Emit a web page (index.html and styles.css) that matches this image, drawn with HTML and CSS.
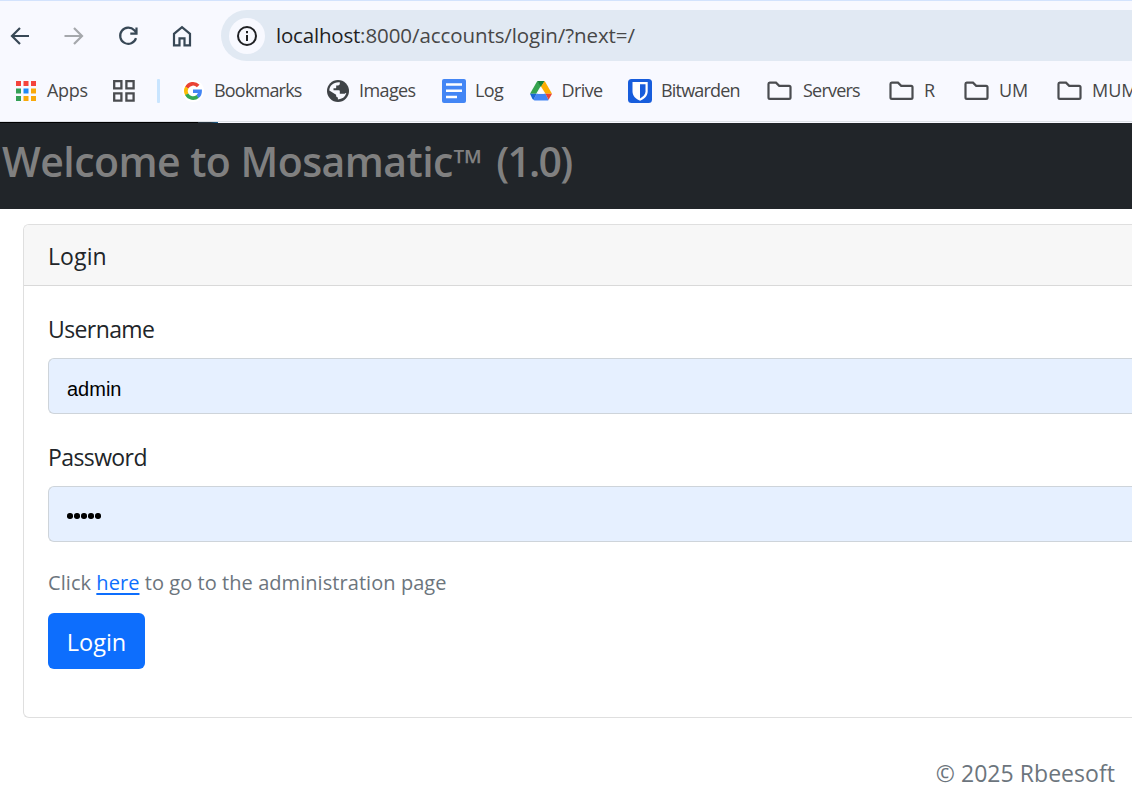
FILE: index.html
```html
<!DOCTYPE html>
<html lang="en">
<head>
<meta charset="utf-8">
<title>Mosamatic</title>
<link rel="stylesheet" href="styles.css">
</head>
<body>
<div class="browser">
  <div class="toolbar">
    <svg class="nav nav-back" width="24" height="24" viewBox="0 0 24 24"><path d="M21 12H4.500M12 4L4 12l8 8" /></svg>
    <svg class="nav nav-forward" width="24" height="24" viewBox="0 0 24 24"><path d="M2.500 12H20M12 4l8 8-8 8" /></svg>
    <svg class="nav nav-reload" width="24" height="24" viewBox="0 0 24 24"><path d="M20 14.200A8.100 8.100 0 1 1 18.300 6.300L20.300 8.500M20.500 3.500v6.200h-6.200" /></svg>
    <svg class="nav nav-home" width="24" height="24" viewBox="0 0 24 24"><path d="M4 21.300V9.800L12 3.200l8 6.600v11.500h-5.500v-7h-5v7z" /></svg>
    <div class="address">
      <span class="info"><svg width="24" height="24" viewBox="0 0 24 24"><circle cx="12" cy="12" r="9" fill="none" stroke="#202124" stroke-width="2"/><path d="M11 11h2v6h-2zM11 7h2v2.200h-2z" fill="#202124"/></svg></span>
      <span class="url"><b>localhost</b>:8000/accounts/login/?next=/</span>
    </div>
  </div>
  <div class="bookmarks">
    <div class="mark apps">
      <svg width="20" height="20" viewBox="0 0 20 20"><path fill="#f4433c" d="M0 0h5v5H0zM7.500 0h5v5h-5zM15 0h5v5h-5z"/><path fill="#34a056" d="M0 7.500h5v5H0zM0 15h5v5H0z"/><path fill="#1e88f5" d="M7.500 7.500h5v5h-5z"/><path fill="#f9a90a" d="M15 7.500h5v5h-5zM7.500 15h5v5h-5zM15 15h5v5h-5z"/></svg>
      <span>Apps</span>
    </div>
    <svg class="grid" width="22" height="22" viewBox="0 0 22 22"><path d="M1.200 1.200h7.200v7.200H1.200zM13.400 1.200h7.200v7.200h-7.200zM1.200 13.400h7.200v7.200H1.200zM13.400 13.400h7.200v7.200h-7.200z" fill="none" stroke="#4a4c50" stroke-width="2.300"/></svg>
    <i class="divider"></i>
    <div class="mark google">
      <svg width="22" height="22" viewBox="0 0 22 22"><circle cx="11" cy="11" r="11" fill="#fff"/><g fill="none" stroke-width="3.600"><path stroke="#ea4335" d="M4.700 7.700A7.100 7.100 0 0 1 16.200 6"/><path stroke="#fbbc05" d="M4.800 14.500a7.100 7.100 0 0 1 0-7"/><path stroke="#34a853" d="M15.800 16.300A7.100 7.100 0 0 1 4.700 14.300"/><path stroke="#4285f4" d="M11 11.200h7.100q0 3.500-2.500 5.300"/></g></svg>
      <span>Bookmarks</span>
    </div>
    <div class="mark images">
      <svg width="22" height="22" viewBox="0 0 22 22"><circle cx="11" cy="11" r="11" fill="#3f4347"/><path fill="#f8f9ff" d="M12.800 2.200v1.600q0 1.800-1.800 1.800H9.200v1.800q0 .9-.9.900H6.500v1.900h5.400q.9 0 .9.900v2.700h3.700q1.300 0 2.100-.9.700 0 .7.400-1.900 5.800-8.400 6.100v-1.800q-1.800 0-1.800-1.800v-1L2.300 10.400C2.500 5.500 6.500 1.700 12.800 2.200z"/></svg>
      <span>Images</span>
    </div>
    <div class="mark log">
      <svg width="24" height="24" viewBox="0 0 24 24"><rect width="24" height="24" rx="2" fill="#4386f5"/><path d="M4 5.500h16M4 11.800h16M4 18h11" stroke="#fff" stroke-width="2.500"/></svg>
      <span>Log</span>
    </div>
    <div class="mark drive">
      <svg width="22" height="20" viewBox="0 0 22 20"><path fill="#34a34f" d="M7.300 0L0 12.700h6.200L11 4.500z"/><path fill="#188038" d="M7.300 0h7.400L11 6.300z"/><path fill="#fbad00" d="M14.700 0L22 12.700h-6.500L11 5.500z"/><path fill="#1967d2" d="M0 12.700h6.700L3.600 18.800q-1-.3-1.400-1.200z"/><path fill="#4285f4" d="M6.600 12.700h9l3 6.300q-.6.500-1.400.5H4.700q-.7 0-1.300-.7z"/><path fill="#ea4335" d="M15.400 12.700H22l-3.400 6.100z"/><path fill="#fff" d="M11 7l3.200 5.700H7.800z"/></svg>
      <span>Drive</span>
    </div>
    <div class="mark bitwarden">
      <svg width="24" height="24" viewBox="0 0 24 24"><rect width="24" height="24" rx="3.500" fill="#175ddc"/><path fill="#fff" d="M4.500 3h15.200v9.500c0 4.500-3.500 7.500-7.600 9.300-4.100-1.800-7.600-4.800-7.600-9.300z"/><path fill="#175ddc" d="M12 5.200h5.500v7.300c0 3-2.500 5.200-5.500 6.900z"/></svg>
      <span>Bitwarden</span>
    </div>
    <div class="mark servers"><svg class="folder" width="25" height="20" viewBox="0 0 25 20"><path d="M2.700 1.700H9l3.200 3.200h9.900q1.400 0 1.400 1.400v10.200q0 1.400-1.400 1.400H2.900q-1.400 0-1.400-1.400V3.100q0-1.400 1.200-1.400z"/></svg><span>Servers</span></div>
    <div class="mark r"><svg class="folder" width="25" height="20" viewBox="0 0 25 20"><path d="M2.700 1.700H9l3.200 3.200h9.900q1.400 0 1.400 1.400v10.200q0 1.400-1.400 1.400H2.900q-1.400 0-1.400-1.400V3.100q0-1.400 1.200-1.400z"/></svg><span>R</span></div>
    <div class="mark um"><svg class="folder" width="25" height="20" viewBox="0 0 25 20"><path d="M2.700 1.700H9l3.200 3.200h9.900q1.400 0 1.400 1.400v10.200q0 1.400-1.400 1.400H2.900q-1.400 0-1.400-1.400V3.100q0-1.400 1.200-1.400z"/></svg><span>UM</span></div>
    <div class="mark mum"><svg class="folder" width="25" height="20" viewBox="0 0 25 20"><path d="M2.700 1.700H9l3.200 3.200h9.900q1.400 0 1.400 1.400v10.200q0 1.400-1.400 1.400H2.900q-1.400 0-1.400-1.400V3.100q0-1.400 1.200-1.400z"/></svg><span>MUM</span></div>
  </div>
  <div class="loading"><i class="loaded"></i><i class="tip"></i></div>
</div>
<header class="banner"><h1>Welcome to Mosamatic<span class="tm">™</span> <span class="version">(1.0)</span></h1></header>
<main class="card">
  <div class="card-header">Login</div>
  <form class="card-body">
    <label class="label username" for="user">Username</label>
    <input class="field" id="user" type="text" value="admin">
    <label class="label password">Password</label>
    <div class="field secret"><i></i><i></i><i></i><i></i><i></i></div>
    <p class="hint">Click <a href="#">here</a> to go to the administration page</p>
    <button class="submit" type="button">Login</button>
  </form>
</main>
<footer class="footer">© 2025 Rbeesoft</footer>
</body>
</html>
```
FILE: styles.css
```css
* { box-sizing: border-box; }
body {
  margin: 0;
  width: 1132px;
  height: 798px;
  overflow: hidden;
  background: #fff;
  color: #212529;
  font: 23px/36px "Open Sans", "Noto Sans", sans-serif;
}
svg { display: block; flex: none; }
.browser { height: 123px; background: #f8f9ff; border-top: 1px solid #d3e3fd; overflow: hidden; }
.toolbar { display: flex; align-items: center; height: 60px; padding: 9px 0 0 8px; }
.nav { fill: none; stroke: #384856; stroke-width: 2.2; }
.nav-forward { margin-left: 30px; stroke: #a5a8ac; }
.nav-reload { margin-left: 30px; }
.nav-home { margin-left: 30px; }
.address {
  display: flex; align-items: center; flex: 1;
  height: 51px; margin-left: 27px; padding-left: 8px;
  background: #e1e9f3; border-radius: 26px 0 0 26px;
}
.info { display: flex; align-items: center; justify-content: center; flex: none; width: 36px; height: 36px; border-radius: 50%; background: #f8f9ff; }
.url { margin-left: 11px; padding-bottom: 1px; font-size: 20.5px; color: #474747; letter-spacing: -0.08px; white-space: nowrap; }
.url b { font-weight: 400; color: #1f1f1f; letter-spacing: -0.2px; }
.bookmarks { display: flex; align-items: center; height: 60px; padding-left: 16px; font-size: 18px; color: #474747; white-space: nowrap; }
.mark { display: flex; align-items: center; flex: none; }
.mark span { padding-bottom: 2px; letter-spacing: -0.6px; }
.apps { width: 97px; gap: 11px; }
.apps span { letter-spacing: -0.3px; }
.grid { margin-right: 22px; }
.divider { width: 3px; height: 24px; margin-right: 22px; background: #c9e5ff; border-radius: 1px; flex: none; }
.google { width: 145px; gap: 10px; }
.google span, .bitwarden span, .servers span { letter-spacing: -0.8px; }
.images { width: 115px; gap: 10px; }
.log { width: 88px; gap: 9px; }
.drive { width: 98px; gap: 9.5px; }
.bitwarden { width: 139px; gap: 9px; }
.servers { width: 122px; gap: 11px; }
.r { width: 75px; gap: 10px; }
.um { width: 93px; gap: 10px; }
.mum { width: 75px; gap: 10px; }
.r span, .um span, .mum span { letter-spacing: 0; }
.folder { fill: none; stroke: #4a4c50; stroke-width: 2.2; }
.loading { display: flex; height: 2px; border-top: 1px solid #dce0e5; }
.loaded { width: 198px; background: #000; }
.tip { width: 20px; background: linear-gradient(90deg, #25313b 60%, #17659b); }
.banner { height: 86px; background: #212529; color: #808080; padding-left: 2px; }
h1 { margin: 0; font-size: 41px; line-height: 77px; font-weight: 600; letter-spacing: -0.55px; white-space: nowrap; }
.tm { font-size: 38px; letter-spacing: 4px; }
.version { letter-spacing: -1.8px; }
.card { height: 494px; margin: 15px 0 0 23px; border: 1px solid #dfdfdf; border-right: 0; border-radius: 6px 0 0 6px; overflow: hidden; }
.card-header { height: 61px; padding: 13px 24px; background: #f7f7f7; border-bottom: 1px solid #d9d9d9; letter-spacing: 0.1px; }
.card-body { display: flex; flex-direction: column; align-items: flex-start; padding: 24px 0 24px 24px; }
.label { height: 48px; padding-top: 1px; letter-spacing: -0.6px; }
.field { width: 100%; height: 56px; border: 1px solid #ced4da; border-right: 0; border-radius: 6px 0 0 6px; padding: 6px 18px 0; background: #e6f0ff; color: #000; font: 20px "Liberation Sans", Arial, sans-serif; }
.password { margin-top: 24px; }
.secret { display: flex; align-items: center; gap: 1.6px; padding-top: 4px; }
.secret i { width: 5.5px; height: 5.5px; border-radius: 50%; background: #000; }
.hint { margin: 23px 0 12px; font-size: 20px; color: #6c757d; letter-spacing: 0.06px; white-space: nowrap; }
.hint a { color: #0d6efd; text-decoration-thickness: 2px; text-underline-offset: 3px; }
.submit { width: 97px; height: 56px; padding: 1px 0 0; border: 0; border-radius: 6px; background: #0d6efd; color: #fff; font: 23.5px "Open Sans", sans-serif; }
.footer { margin-top: 37px; padding-right: 17px; text-align: right; color: #6c757d; letter-spacing: 0.05px; }
```
